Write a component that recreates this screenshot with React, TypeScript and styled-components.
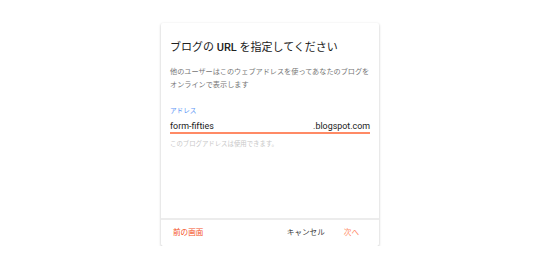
import React from 'react';
import styled, { createGlobalStyle } from 'styled-components';

const GlobalStyle = createGlobalStyle`
  html, body {
    margin: 0;
    padding: 0;
    background: #ffffff;
  }
  body {
    font-family: Roboto, "Noto Sans CJK JP", "Noto Sans", sans-serif;
  }
`;

const Page = styled.div`
  padding: 23px 0 0 161px;
`;

const Card = styled.div`
  width: 218px;
  height: 223px;
  background: #ffffff;
  border-radius: 2px;
  box-shadow: 0 1px 3px rgba(0, 0, 0, 0.18), 0 1px 2px rgba(0, 0, 0, 0.1);
  display: flex;
  flex-direction: column;
  box-sizing: border-box;
`;

const Body = styled.div`
  flex: 1;
  padding: 17px 9px 0 9px;
`;

const Title = styled.h2`
  margin: 0;
  font-size: 11px;
  line-height: 16px;
  font-weight: 400;
  color: #212121;
  white-space: nowrap;

  & b {
    font-weight: 500;
  }
`;

const Description = styled.p`
  margin: 9px 0 0;
  font-size: 7.15px;
  line-height: 13px;
  color: #757575;
  white-space: nowrap;
`;

const Label = styled.div`
  margin-top: 15px;
  font-size: 6.6px;
  line-height: 10px;
  color: #5e97f6;
`;

const Field = styled.div`
  margin-top: 4px;
  display: flex;
  justify-content: space-between;
  align-items: center;
  border-bottom: 2px solid #ff8a65;
  font-size: 8.9px;
  line-height: 12px;
  color: #212121;
`;

const Value = styled.span``;

const Suffix = styled.span``;

const Helper = styled.div`
  margin-top: 5px;
  font-size: 6.4px;
  line-height: 10px;
  color: #c8c8c8;
  white-space: nowrap;
`;

const Footer = styled.div`
  border-top: 2px solid #ececec;
  height: 28px;
  display: flex;
  align-items: center;
  padding: 0 20px 0 12px;
  box-sizing: border-box;
`;

const Actions = styled.div`
  margin-left: auto;
  display: flex;
  gap: 19px;
`;

const Button = styled.button<{ $tone: 'primary' | 'plain' | 'soft' }>`
  border: 0;
  background: none;
  padding: 0;
  font-family: inherit;
  font-size: 7.6px;
  line-height: 12px;
  cursor: pointer;
  color: ${(p) =>
    p.$tone === 'primary' ? '#f4511e' : p.$tone === 'soft' ? '#ff8a65' : '#424242'};
`;

export default function App() {
  return (
    <>
      <GlobalStyle />
      <Page>
        <Card>
          <Body>
            <Title>
              ブログの <b>URL</b> を指定してください
            </Title>
            <Description>
              他のユーザーはこのウェブアドレスを使ってあなたのブログを
              <br />
              オンラインで表示します
            </Description>
            <Label>アドレス</Label>
            <Field>
              <Value>form-fifties</Value>
              <Suffix>.blogspot.com</Suffix>
            </Field>
            <Helper>このブログアドレスは使用できます。</Helper>
          </Body>
          <Footer>
            <Button $tone="primary">前の画面</Button>
            <Actions>
              <Button $tone="plain">キャンセル</Button>
              <Button $tone="soft">次へ</Button>
            </Actions>
          </Footer>
        </Card>
      </Page>
    </>
  );
}
